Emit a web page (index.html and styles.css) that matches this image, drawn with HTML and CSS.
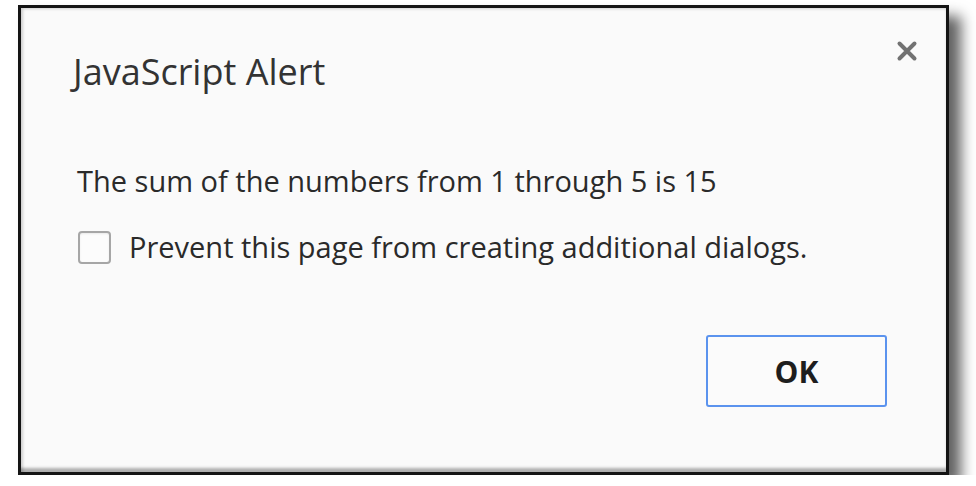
FILE: index.html
```html
<!DOCTYPE html>
<html lang="en">
<head>
    <meta charset="UTF-8">
    <title>JavaScript Alert</title>
    <link rel="stylesheet" href="styles.css">
</head>
<body>
    <!-- Cornice dello screenshot -->
    <div class="frame">
        <div class="dialog">
            <div class="dialog-head">
                <div class="dialog-title">JavaScript Alert</div>
                <svg class="close" width="22" height="22" viewBox="0 0 22 22">
                    <path d="M3.5 3.5 L18.5 18.5 M18.5 3.5 L3.5 18.5" stroke="#727272" stroke-width="4" stroke-linecap="round"/>
                </svg>
            </div>

            <div class="message">The sum of the numbers from 1 through 5 is 15</div>

            <label class="check-row">
                <span class="checkbox"></span>
                <span>Prevent this page from creating additional dialogs.</span>
            </label>

            <div class="buttons">
                <button class="ok">OK</button>
            </div>
        </div>
    </div>
</body>
</html>
```

FILE: styles.css
```css
body {
    margin: 0;
    background-color: #ffffff;
    font-family: "Open Sans", "Noto Sans", sans-serif;
    color: #222;
}

.frame {
    box-sizing: border-box;
    width: 931px;
    height: 470px;
    margin: 5px 0 0 18px;
    border: 3px solid #141414;
    box-shadow: 12px 11px 13px rgba(0, 0, 0, 0.62);
}

.dialog {
    box-sizing: border-box;
    height: 100%;
    background-color: #fafafa;
    box-shadow: inset 3px 2px 3px -1px rgba(0, 0, 0, 0.18),
                inset -2px -7px 3px -3px rgba(0, 0, 0, 0.3);
    padding: 0 59px 0 52px;
    display: flex;
    flex-direction: column;
}

.dialog-head {
    display: flex;
    justify-content: space-between;
    align-items: flex-start;
    margin-top: 39px;
}

.dialog-title {
    font-size: 36px;
    line-height: 50px;
    color: #333;
}

.close {
    margin: -7px -31px 0 0;
    filter: blur(0.6px);
}

.message {
    margin: 64px 0 0 4px;
    font-size: 29px;
    line-height: 40px;
    color: #2a2a2a;
}

.check-row {
    display: flex;
    align-items: center;
    gap: 18px;
    margin: 26px 0 0 5px;
    font-size: 29px;
    line-height: 40px;
    color: #2a2a2a;
}

.checkbox {
    box-sizing: border-box;
    flex: none;
    width: 33px;
    height: 33px;
    border: 2px solid #a6a6a6;
    border-radius: 4px;
    background-color: #fcfcfc;
    box-shadow: inset 0 1px 2px rgba(0, 0, 0, 0.08);
}

.buttons {
    display: flex;
    justify-content: flex-end;
    margin-top: 68px;
}

.ok {
    box-sizing: border-box;
    width: 181px;
    height: 72px;
    border: 2px solid #5b93ee;
    border-radius: 3px;
    background-color: #fbfbfb;
    font-family: "Open Sans", "Noto Sans", sans-serif;
    font-size: 30px;
    font-weight: bold;
    color: #1e1e1e;
}
```
